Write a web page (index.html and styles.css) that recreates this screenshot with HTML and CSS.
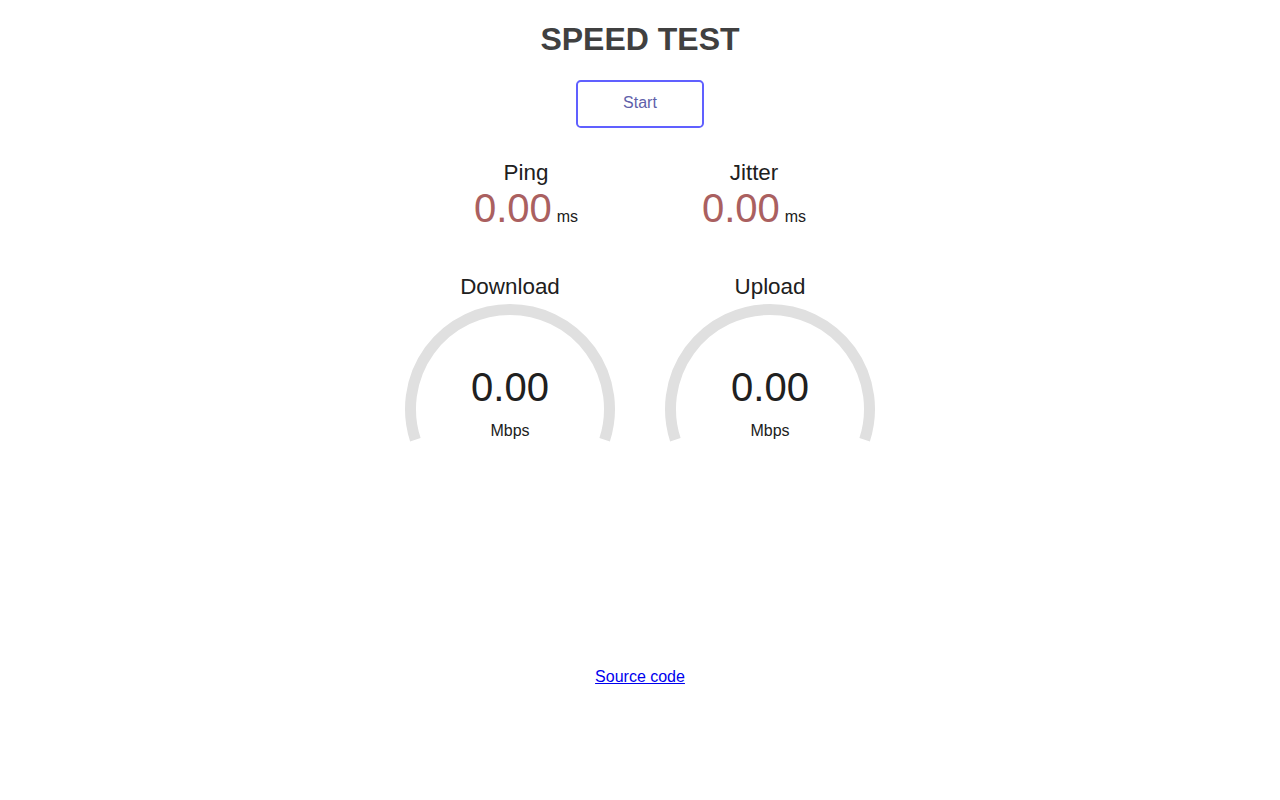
FILE: index.html
```html
<!DOCTYPE html>
<html lang="en">
<head>
    <meta charset="UTF-8">
    <meta name="viewport" content="width=device-width, initial-scale=1.0">
    <title>Speed Test</title>
    <link rel="stylesheet" href="styles.css">
</head>
<body>
    <h1>SPEED TEST</h1>
    <div class="start-btn">Start</div>

    <div class="test">
        <div class="test-group">
            <div class="small-area">
                <div class="test-name">Ping</div>
                <div class="small-value">
                    <span class="meter-text ping">0.00</span>
                    <span class="unit">ms</span>
                </div>
            </div>
            <div class="small-area">
                <div class="test-name">Jitter</div>
                <div class="small-value">
                    <span class="meter-text ping">0.00</span>
                    <span class="unit">ms</span>
                </div>
            </div>
        </div>

        <div class="test-group">
            <div class="gauge-area">
                <svg class="gauge" viewBox="0 0 256 200">
                    <path d="M33.37 167.75 A99.5 99.5 0 1 1 222.63 167.75"/>
                </svg>
                <div class="test-name">Download</div>
                <div class="meter-text big">0.00</div>
                <div class="unit gauge-unit">Mbps</div>
            </div>
            <div class="gauge-area">
                <svg class="gauge" viewBox="0 0 256 200">
                    <path d="M33.37 167.75 A99.5 99.5 0 1 1 222.63 167.75"/>
                </svg>
                <div class="test-name">Upload</div>
                <div class="meter-text big">0.00</div>
                <div class="unit gauge-unit">Mbps</div>
            </div>
        </div>
    </div>

    <a class="source" href="#">Source code</a>
</body>
</html>
```

FILE: styles.css
```css
* {
    box-sizing: border-box;
}

body {
    margin: 0;
    padding: 0 16px 16px;
    text-align: center;
    font-family: "Liberation Sans", Arial, sans-serif;
    font-size: 16px;
    color: #202020;
    background: #fff;
}

h1 {
    margin: 21px 0 22px;
    font-size: 32px;
    line-height: 37px;
    color: #404040;
}

.start-btn {
    width: 128px;
    height: 48px;
    margin: 0 auto;
    line-height: 41px;
    color: #6060AA;
    border: 2.4px solid #6060FF;
    border-radius: 4.8px;
    cursor: pointer;
}

.test {
    margin-top: 32px;
    margin-bottom: 196px;
}

.test-group {
    display: flex;
    justify-content: center;
    gap: 4px;
}

.small-area {
    width: 224px;
    height: 112px;
}

.test-name {
    font-size: 22.4px;
    line-height: 26px;
}

.small-value {
    display: flex;
    justify-content: center;
    align-items: baseline;
    gap: 5px;
    margin-top: -1px;
}

.meter-text {
    font-size: 40px;
    line-height: 46px;
}

.ping {
    color: #AA6060;
}

.unit {
    font-size: 16px;
    line-height: 18px;
}

.gauge-area {
    position: relative;
    width: 256px;
    height: 200px;
}

.gauge {
    position: absolute;
    top: 0;
    left: 0;
    width: 256px;
    height: 200px;
}

.gauge path {
    fill: none;
    stroke: #E0E0E0;
    stroke-width: 11;
}

.gauge-area .test-name {
    position: relative;
    padding-top: 2px;
}

.big {
    position: relative;
    margin-top: 64px;
}

.gauge-unit {
    position: relative;
    margin-top: 12px;
}

.source {
    display: inline-block;
    line-height: 18px;
    color: #0000EE;
}
```
